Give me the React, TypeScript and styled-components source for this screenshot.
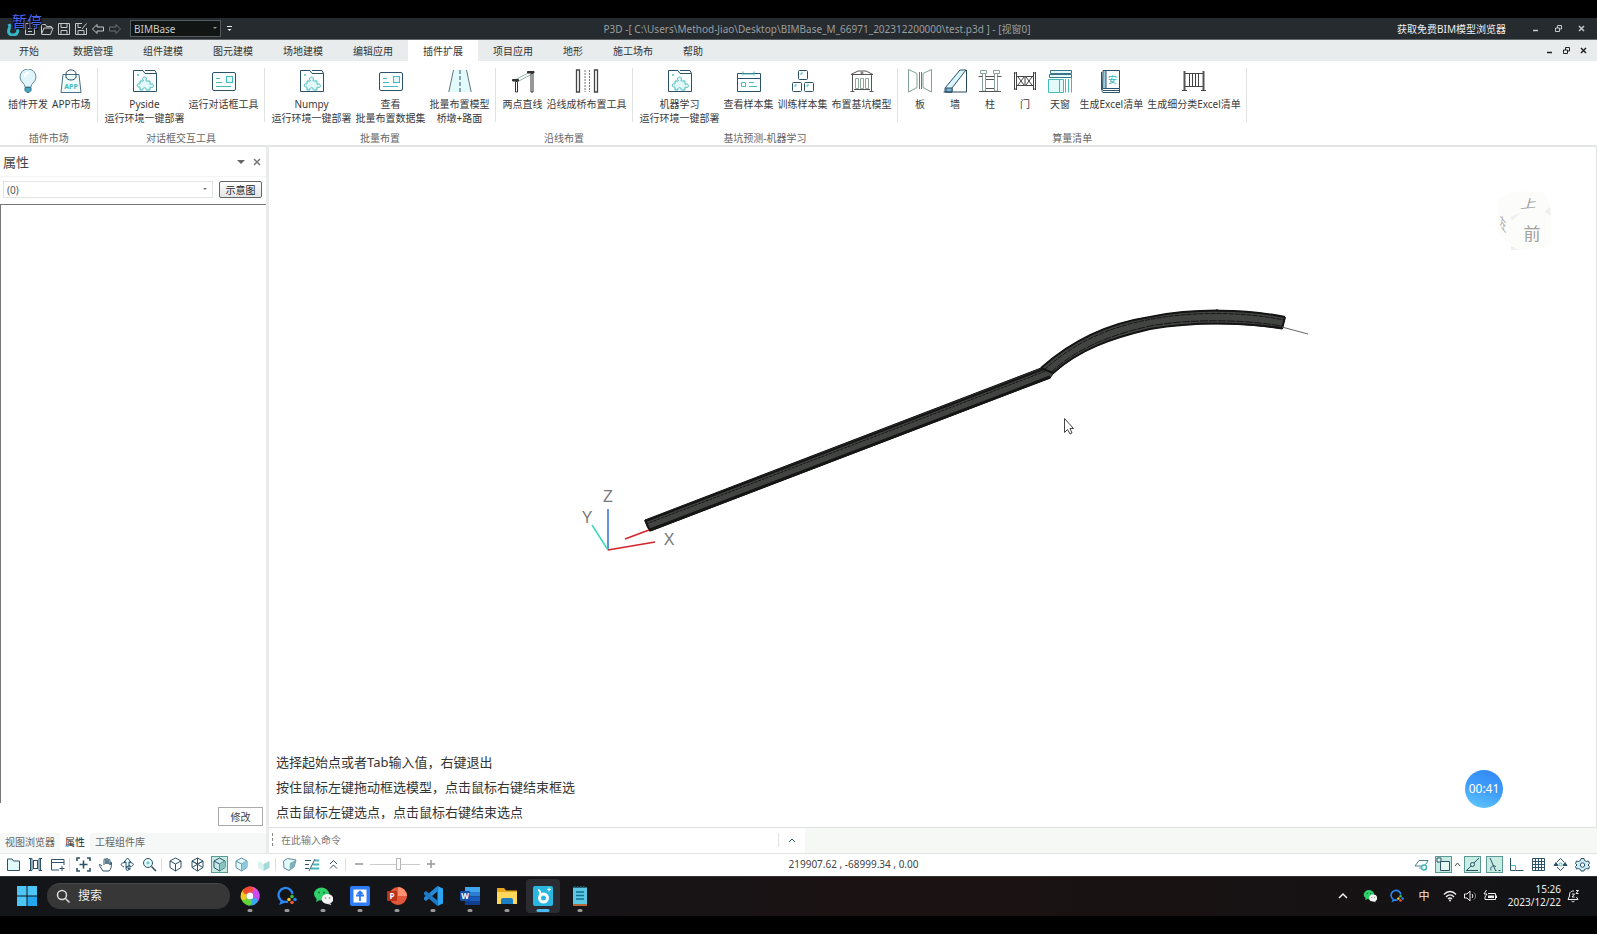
import React from "react";
import styled, { createGlobalStyle } from "styled-components";

const NAVY = "#2c5268";
const TEAL = "#45b9bb";
const PALE = "#e3fafa";
const GRAY = "#3f4444";

const GlobalStyle = createGlobalStyle`
  *, *::before, *::after { box-sizing: border-box; }
  body { margin: 0; background: #000; }
  body, button, input, select {
    font-family: "Noto Sans", "Noto Sans CJK SC", sans-serif;
    font-size: 10px;
    line-height: 14px;
    color: #333;
  }
  button { border: 0; padding: 0; background: none; white-space: nowrap; }
`;

/* ---------- shell ---------- */

const Screen = styled.div`
  position: relative;
  display: flex;
  flex-direction: column;
  min-height: 100vh;
  padding: 18px 0;
  background: #000;
`;

const RecorderState = styled.div`
  position: absolute;
  left: 12px;
  top: 11px;
  font-size: 15px;
  line-height: 20px;
  color: #4a66f0;
  text-shadow: 0 0 2px #000, 1px 1px 1px #000, -1px -1px 1px #000;
`;

const TitleBar = styled.header`
  display: flex;
  align-items: center;
  height: 22px;
  padding: 0 4px 0 5px;
  background: #262b2f;
  border-bottom: 1px solid #62686a;
`;

const QuickTools = styled.div`
  display: flex;
  gap: 1px;
  width: 125px;
`;

const QuickButton = styled.button`
  width: 16px;
  height: 16px;
  display: grid;
  place-items: center;
`;

const SelectBox = styled.label<{ $dark?: boolean }>`
  position: relative;
  display: block;
  flex: ${(p) => (p.$dark ? "0 0 91px" : "1")};
  &::after {
    content: "";
    position: absolute;
    right: ${(p) => (p.$dark ? "4px" : "6px")};
    top: 7px;
    border: 2px solid transparent;
    border-top-color: ${(p) => (p.$dark ? "#999" : "#777")};
  }
  select {
    display: block;
    width: 100%;
    height: 17px;
    padding: 0 3px;
    appearance: none;
    outline: 0;
    border-radius: 0;
    border: 1px solid ${(p) => (p.$dark ? "#565b5d" : "#e2e4e4")};
    background: ${(p) => (p.$dark ? "#111514" : "#fff")};
    color: ${(p) => (p.$dark ? "#c9cbcb" : "#555")};
  }
`;

const Title = styled.h1`
  flex: 1;
  margin: 0;
  text-align: center;
  font-size: 10px;
  line-height: 14px;
  font-weight: 400;
  color: #9a9d9e;
  white-space: nowrap;
`;

const ViewerLink = styled.a`
  color: #eee;
  text-decoration: none;
  padding-right: 18px;
`;

const WindowButtons = styled.div<{ $tone: string; $w: number }>`
  display: flex;
  color: ${(p) => p.$tone};
  button {
    width: ${(p) => p.$w}px;
    height: 18px;
    display: grid;
    place-items: center;
    color: inherit;
  }
`;

const TabStrip = styled.nav`
  display: flex;
  align-items: center;
  height: 21px;
  padding-right: 5px;
  background: #e8eced;
`;

const Tab = styled.button<{ $active?: boolean }>`
  height: 21px;
  padding: 0 15px;
  background: ${(p) => (p.$active ? "#fff" : "transparent")};
  &:first-child { padding: 0 19px; }
`;

const Spacer = styled.div`
  flex: 1;
`;

/* ---------- ribbon ---------- */

const Ribbon = styled.section`
  display: flex;
  height: 86px;
  padding-top: 7px;
  background: #fff;
  border-bottom: 2px solid #e4e6e6;
`;

const Group = styled.div`
  display: flex;
  flex-direction: column;
  &:first-child > :first-child { padding-left: 8px; padding-right: 6px; }
`;

const GroupTools = styled.div`
  display: flex;
  align-items: flex-start;
  gap: 4px;
  height: 54px;
  padding: 0 5px 0 7px;
  border-right: 1px solid #e0e2e2;
`;

const Tool = styled.button`
  display: flex;
  flex-direction: column;
  align-items: center;
  min-width: 31px;
  padding-top: 1px;
  color: #3a3a3a;
  svg { flex: none; margin-bottom: 4px; }
`;

const GroupLabel = styled.div`
  padding-top: 9px;
  text-align: center;
  color: #666;
`;

/* ---------- work area ---------- */

const Work = styled.main`
  flex: 1;
  display: flex;
  background: #fff;
`;

const Panel = styled.aside`
  display: flex;
  flex-direction: column;
  width: 269px;
  border-right: 3px solid #eaecec;
`;

const PanelHead = styled.div`
  display: flex;
  align-items: center;
  height: 30px;
  padding: 0 1px 0 3px;
  border-bottom: 1px solid #f4f5f5;
  h2 {
    flex: 1;
    margin: 0;
    font-size: 13px;
    line-height: 20px;
    font-weight: 400;
    color: #444;
  }
  button {
    width: 16px;
    height: 16px;
    display: grid;
    place-items: center;
  }
`;

const PanelRow = styled.div`
  display: flex;
  gap: 6px;
  align-items: center;
  height: 27px;
  padding: 0 4px 2px 3px;
`;

const SchemaButton = styled.button`
  width: 43px;
  height: 17px;
  border: 1px solid #666;
  border-radius: 2px;
  background: linear-gradient(#fff, #e2e6e6);
  color: #222;
`;

const PropertyList = styled.div`
  flex: 1;
  border-top: 1px solid #777;
  border-left: 1px solid #777;
`;

const PanelFoot = styled.div`
  display: flex;
  justify-content: flex-end;
  padding: 4px 3px 7px;
`;

const EditButton = styled.button`
  width: 45px;
  height: 19px;
  border: 1px solid #aaa;
  background: #fff;
  color: #444;
`;

const PanelTabs = styled.div`
  display: flex;
  height: 21px;
  background: #f5f8f6;
  border-bottom: 1px solid #e8eaea;
`;

const PanelTab = styled.button<{ $active?: boolean }>`
  height: 17px;
  padding: 0 5px;
  color: ${(p) => (p.$active ? "#222" : "#666")};
  background: ${(p) => (p.$active ? "#fff" : "transparent")};
`;

const Stage = styled.section`
  flex: 1;
  display: flex;
  flex-direction: column;
  min-width: 0;
`;

const Viewport = styled.div`
  position: relative;
  flex: 1;
  display: flex;
  flex-direction: column;
  justify-content: flex-end;
  border-right: 1px solid #e2e4e4;
  border-bottom: 1px solid #e0e2e2;
`;

const Scene = styled.svg`
  position: absolute;
  inset: 0;
  width: 100%;
  height: 100%;
`;

const Prompts = styled.div`
  padding: 0 0 2px 7px;
  font-size: 13px;
  line-height: 25px;
  color: #333;
`;

const Timer = styled.div`
  position: absolute;
  right: 93px;
  bottom: 19px;
  width: 38px;
  height: 38px;
  border-radius: 50%;
  background: linear-gradient(200deg, #2f86f6, #3f9df8 50%, #63cbfb);
  color: #fff;
  font-size: 12px;
  line-height: 38px;
  text-align: center;
`;

const CommandBar = styled.div`
  display: flex;
  height: 26px;
  background: #f6f8f6;
  border-bottom: 1px solid #e0e2e2;
`;

const CommandField = styled.div`
  display: flex;
  align-items: center;
  flex: 0 1 536px;
  padding-bottom: 2px;
  background: #fff;
  &::before {
    content: "";
    height: 13px;
    margin-left: 3px;
    border-left: 1px dashed #888;
  }
  input {
    flex: 1;
    border: 0;
    outline: 0;
    padding: 0 8px;
    background: none;
  }
  input::placeholder { color: #777; opacity: 1; }
  button {
    width: 27px;
    height: 14px;
    border-left: 1px solid #e0e2e2;
    display: grid;
    place-items: center;
  }
`;

/* ---------- status bar ---------- */

const StatusBar = styled.footer`
  display: flex;
  align-items: center;
  height: 22px;
  padding: 0 4px 2px 2px;
  background: #fff;
`;

const StatusSide = styled.div<{ $end?: boolean }>`
  flex: 1;
  display: flex;
  align-items: center;
  justify-content: ${(p) => (p.$end ? "flex-end" : "flex-start")};
`;

const StatusButton = styled.button<{ $on?: boolean }>`
  width: 22px;
  height: 18px;
  display: grid;
  place-items: center;
  span {
    display: grid;
    place-items: center;
    width: 17px;
    height: 17px;
    border: 1px solid ${(p) => (p.$on ? "#5b9a92" : "transparent")};
    background: ${(p) => (p.$on ? "#c6ece4" : "transparent")};
  }
`;

const Caret = styled.button`
  width: 7px;
`;

const Divider = styled.i`
  width: 1px;
  height: 13px;
  margin: 0 2px 0 1px;
  background: #dcdede;
`;

const ZoomSlider = styled.input`
  appearance: none;
  width: 50px;
  height: 14px;
  margin: 0;
  background: linear-gradient(#ccc, #ccc) center / 100% 1px no-repeat;
  &::-webkit-slider-thumb {
    appearance: none;
    width: 5px;
    height: 12px;
    background: #fff;
    border: 1px solid #b5b5b5;
  }
`;

const Coordinates = styled.output`
  width: 260px;
  padding-left: 112px;
  text-align: center;
  white-space: nowrap;
  color: #444;
`;

/* ---------- desktop taskbar ---------- */

const Taskbar = styled.div`
  display: flex;
  align-items: center;
  height: 40px;
  padding: 0 16px 2px 16px;
  background: linear-gradient(90deg, #131518, #141518 30%, #1b1213 55%, #181213 75%, #121316);
  border-top: 1px solid #333;
`;

const StartButton = styled.button`
  width: 22px;
  height: 22px;
  margin-right: 9px;
  display: grid;
  place-items: center;
`;

const SearchPill = styled.label`
  display: flex;
  align-items: center;
  gap: 8px;
  width: 183px;
  height: 26px;
  margin-right: 3px;
  padding-left: 9px;
  border-radius: 13px;
  background: #373737;
  border-top: 1px solid #484848;
  input {
    width: 120px;
    padding: 0;
    border: 0;
    outline: 0;
    background: none;
    font-size: 12px;
    line-height: 18px;
  }
  input::placeholder { color: #eee; opacity: 1; }
`;

const Apps = styled.div`
  flex: 0 1 364px;
  display: flex;
  justify-content: space-between;
`;

const AppButton = styled.button<{ $active?: boolean }>`
  position: relative;
  width: 34px;
  height: 34px;
  border-radius: 4px;
  display: grid;
  place-items: center;
  background: ${(p) => (p.$active ? "#2b2c31" : "transparent")};
  &::after {
    content: "";
    position: absolute;
    bottom: 1px;
    left: 50%;
    width: ${(p) => (p.$active ? 13 : 5)}px;
    height: 3px;
    border-radius: 2px;
    transform: translateX(-50%);
    background: ${(p) => (p.$active ? "#4cb8f0" : "#999")};
  }
`;

const Tray = styled.div`
  display: flex;
  align-items: center;
  color: #eee;
`;

const TrayButton = styled.button<{ $w: number }>`
  width: ${(p) => p.$w}px;
  height: 24px;
  display: grid;
  place-items: center;
  color: #eee;
  font-size: 11px;
`;

const Clock = styled.div`
  width: 60px;
  margin-right: 4px;
  text-align: right;
  line-height: 13px;
  color: #eee;
`;

/* ---------- drawings ---------- */

type IconProps = { size?: number; box?: string; children: React.ReactNode; stroke?: string };

function Icon({ size = 24, box, children, stroke = NAVY }: IconProps) {
  return (
    <svg
      width={size}
      height={size}
      viewBox={box ?? `0 0 ${size} ${size}`}
      fill="none"
      stroke={stroke}
      strokeWidth="1"
      aria-hidden="true"
    >
      {children}
    </svg>
  );
}

const puzzle = (
  <Icon>
    <path d="M.5 22.5V1.5H10l2 3h11.500v18z" fill="#fbffff" />
    <path d="M12 1.500h10l1.500 3" />
    <circle cx="5" cy="6" r=".6" stroke={TEAL} />
    <path
      d="M7 12h3c1 0 0-1-.5-1.800C9 7.500 14 7.500 13.500 10c-.5 1-1 2 0 2h3.500v3c0 1 1 0 1.800 0 2.200 0 2.200 3.500 0 3.500-1 0-1.800-1-1.800 0V21h-3.500c-1 0 0-1-.5-1.500-.8-1-2.500-1-3 0-.3.500.3 1.500-.7 1.500H7v-2.500c0-1-1-.5-1.500-.5-1.800-.5-1.800-3 0-3.200.5 0 1.500.8 1.500-.3z"
      stroke={TEAL}
      fill={PALE}
    />
  </Icon>
);

const card = (
  <Icon>
    <rect x=".5" y="3.500" width="23" height="18" rx="1.500" fill="#fbffff" />
    <path d="M4 9.500h4M4 13.500h6M4 17.500h15" stroke={TEAL} />
    <rect x="14.500" y="7.500" width="6" height="6" stroke={TEAL} fill={PALE} />
  </Icon>
);

const icons = {
  bulb: (
    <Icon>
      <path d="M9 18c0-4-5-5-5-10a8 8 0 0 1 16 0c0 5-5 6-5 10z" fill="#dff5fa" stroke="#6a8fa0" />
      <path d="M9 8c0-3 2-4 4-4" stroke="#fff" strokeWidth="2" />
      <path d="M9 18.500h6v3l-2 2h-2l-2-2z" fill="#49a3bd" stroke="#2f6f88" />
    </Icon>
  ),
  bag: (
    <Icon>
      <path d="M4 5.500h16l2 18H2z" fill="#effcfc" stroke="#4b6e80" />
      <path d="M7 8.500V5c0-5.500 10-5.500 10 0v3.500M7 8c1 4 9 4 10 0" />
      <text x="12" y="20" textAnchor="middle" fontSize="7" fontWeight="700" fill={TEAL} stroke="none" fontFamily="Noto Sans">APP</text>
    </Icon>
  ),
  puzzle,
  card,
  road: (
    <Icon>
      <path d="M6 1h12l5 22H1z" fill={PALE} stroke="none" />
      <path d="M5.500 1 .8 23M18.500 1l4.700 22" stroke="#5d7585" />
      <path d="M12 1v22" strokeDasharray="4 2" />
    </Icon>
  ),
  piers: (
    <Icon stroke="#333">
      <path d="M2 12 19 3M6 13l15-8" stroke="#8fb5a5" />
      <path d="M4.500 12.500h2v10.500h-2zM20 4.500h2V23h-2z" fill="#fff" />
      <path d="M1.500 10.500h6v1.500h-6zM16.500 2.500h6.500v1.500h-6.500z" fill="#333" />
    </Icon>
  ),
  along: (
    <Icon stroke="#444">
      <path d="M1.500 1h3v22h-3zM19.500 1h3v22h-3z" strokeWidth="1.300" />
      <path d="M10 1v22M14.500 1v22" strokeDasharray="2 1" stroke="#777" />
    </Icon>
  ),
  calendar: (
    <Icon>
      <path d="M.5 4.500h23v18H.5zM1 9.500h22" fill="#fbffff" />
      <path d="M6 2.500v4M17 2.500v4M4.500 13.500h4v4h-4zM12 13.500h5M12 17.500h8" stroke={TEAL} />
      <path d="M7 5h9" stroke={TEAL} />
    </Icon>
  ),
  boxes: (
    <Icon>
      <rect x="7.500" y="1.500" width="9" height="9" rx="1" />
      <rect x="1.500" y="13.500" width="9" height="9" rx="1" />
      <rect x="13.500" y="13.500" width="9" height="9" rx="1" />
      <path d="M10 6V4h2M4 18v-2h2M16 18v-2h2" stroke={TEAL} />
    </Icon>
  ),
  pit: (
    <Icon stroke="#555">
      <path d="M1 5.500 8 2h8l7 3.500zM2.500 6v17M21.500 6v17M.5 22.500h4M19.500 22.500h4M4 20.500h16" />
      <path d="M5.500 9.500h3v10h-3zM10.500 9.500h3v10h-3zM15.500 9.500h3v10h-3z" stroke="#8fa89a" />
      <circle cx="12" cy="4" r="1" />
    </Icon>
  ),
  slab: (
    <Icon stroke="#7fa193">
      <path d="M.5.500 9 4.500v14L.5 23zM23.500.500 15 4.500v14l8.500 4.500z" />
      <path d="M11.500 3v17M13.500 3v17" stroke="#777" />
    </Icon>
  ),
  wall: (
    <Icon>
      <path d="M2 19 17 1h6L9 19v4H2z" fill="#d9f4fa" />
      <path d="M3 19h6v4H3z" fill="#7fb3cf" />
      <path d="M.5 23h23V1" stroke="#244b63" />
    </Icon>
  ),
  column: (
    <Icon stroke="#555">
      <path d="M4.500 4h3v18h-3zM16.500 4h3v18h-3z" stroke="#8aa79a" />
      <path d="M2.500 1.500h6v3h-6zM15.500 1.500h6v3h-6z" stroke="#8aa79a" fill="#fff" />
      <path d="M.5 7.500h4m3 0h9m3 0h4M8 10.500h8M8 19.500h8M1 22.500h22" />
    </Icon>
  ),
  gate: (
    <Icon stroke="#444">
      <path d="M1.500 3v18M3.500 3v18M20.500 3v18M22.500 3v18M1 4h3M1 20h3M20 4h3M20 20h3M4 7.500h16M4 16.500h16" />
      <path d="m5 8 6 8m0-8-6 8m8-8 6 8m0-8-6 8M12 8v8" />
    </Icon>
  ),
  skylight: (
    <Icon stroke={TEAL}>
      <path d="M2.500 1.500h21v3h-21zM1.500 5.500h22v3h-22z" fill={PALE} stroke="#3b7486" />
      <path d="M.5 10.500h15v13H.5z" fill={PALE} />
      <path d="M11.500 11v12M17.500 10v13.500M20.500 10v13.500M23.500 9v14.500" />
    </Icon>
  ),
  book: (
    <Icon>
      <path d="M4 1.500h16.500v18H4c-1 0-1.500 4 0 4h16.500v-4" fill="#fbffff" />
      <path d="M4 1.500h3v18H3.500z" fill="#9ccbe0" />
      <path d="M2.500 3v18M4 21.500h16" />
      <text x="13.500" y="14" textAnchor="middle" fontSize="9" fill="#2fb5bd" stroke="none" fontFamily="Noto Sans CJK SC">安</text>
    </Icon>
  ),
  fence: (
    <Icon stroke="#444">
      <path d="M2.500 2v20M21.500 2v20" stroke="#555" strokeWidth="2" />
      <path d="M3 4.500h18M3 17.500h18M7.500 5v12M10.500 5v12M13.500 5v12M16.500 5v12M0 21.500h5M19 21.500h5" />
    </Icon>
  ),
};

type IconName = keyof typeof icons;

const groups: { label: string; tools: [IconName, string, string?][] }[] = [
  { label: "插件市场", tools: [["bulb", "插件开发"], ["bag", "APP市场"]] },
  { label: "对话框交互工具", tools: [["puzzle", "Pyside", "运行环境一键部署"], ["card", "运行对话框工具"]] },
  {
    label: "批量布置",
    tools: [
      ["puzzle", "Numpy", "运行环境一键部署"],
      ["card", "查看", "批量布置数据集"],
      ["road", "批量布置模型", "桥墩+路面"],
    ],
  },
  { label: "沿线布置", tools: [["piers", "两点直线"], ["along", "沿线成桥布置工具"]] },
  {
    label: "基坑预测-机器学习",
    tools: [
      ["puzzle", "机器学习", "运行环境一键部署"],
      ["calendar", "查看样本集"],
      ["boxes", "训练样本集"],
      ["pit", "布置基坑模型"],
    ],
  },
  {
    label: "算量清单",
    tools: [
      ["slab", "板"],
      ["wall", "墙"],
      ["column", "柱"],
      ["gate", "门"],
      ["skylight", "天窗"],
      ["book", "生成Excel清单"],
      ["fence", "生成细分类Excel清单"],
    ],
  },
];

const tabs = ["开始", "数据管理", "组件建模", "图元建模", "场地建模", "编辑应用", "插件扩展", "项目应用", "地形", "施工场布", "帮助"];

const quick: [string, React.ReactNode][] = [
  ["BIMBase", <path key="l" d="M4 5c-3 5-1 8 3 8 5 0 6-5 3-7M3 2l1 3" stroke="#35b6c4" strokeWidth="3" />],
  ["新建", <path key="n" d="M2.500 1.500h9v11h-9zM5 6.500h4M5 9.500h4" />],
  ["打开", <path key="o" d="M1.500 12V2.500h4l1 2h5V6M1.500 12 4 6h9l-2.500 6.500h-9" />],
  ["保存", <path key="s" d="M1.500 1.500h11v11h-11zM4 1.500v4h6v-4M4 12.500v-4h6v4" />],
  ["另存为", <path key="a" d="M8 1.500H1.500v11h11V6M4 1.500v4h3M4 12.500v-4h6v4M12.500 1.500 8 7" />],
  ["撤销", <path key="u" d="M1.500 7 6 2.500V5h6.500v4H6v2.500z" />],
  ["重做", <path key="r" d="M12.500 7 8 2.500V5H1.500v4H8v2.500z" stroke="#6b7274" />],
];

function WindowControls({ tone, width }: { tone: string; width: number }) {
  return (
    <WindowButtons $tone={tone} $w={width}>
      <button aria-label="最小化"><Icon size={9} stroke="currentColor"><path d="M2 6.500h5" strokeWidth="1.500" /></Icon></button>
      <button aria-label="还原">
        <Icon size={9} stroke="currentColor"><path d="M1.500 4h4v3.500h-4zM3.500 4V1.500h4V5h-2" /></Icon>
      </button>
      <button aria-label="关闭"><Icon size={9} stroke="currentColor"><path d="m2 2 5 5m0-5L2 7" strokeWidth="1.500" /></Icon></button>
    </WindowButtons>
  );
}

const cube = (fill: string, extra?: React.ReactNode, stroke = NAVY) => (
  <>
    <path d="M7.500 1 13 4v6.500L7.500 14 2 10.500V4z" fill={fill} stroke={stroke} />
    <path d="M2 4l5.500 3L13 4M7.500 7v7" stroke={stroke} />
    {extra}
  </>
);

type StatusItem = [string, React.ReactNode, boolean?];

const fileTools: StatusItem[] = [
  ["文件夹", <path key="a" d="M1.500 13.500V2H6l1.500 2h6v9.500z" fill={PALE} />],
  ["并排", <path key="a" d="M1 1.500h3v12H1M14 1.500h-3v12h3M2.500 2v11M12.500 2v11M5.500 3v9M9.500 3v9M6 3.500h3M6 11.500h3" />],
  ["新窗口", <path key="a" d="M14 8V2.500H1.500V13H9M1.500 5.500H14M12 9v5M9.500 11.500h5" />],
];
const navTools: StatusItem[] = [
  ["适合窗口", <path key="a" d="M1 4V1h3M11 1h3v3M14 11v3h-3M4 14H1v-3M7.500 3.500v8M3.500 7.500h8" strokeWidth="1.600" />],
  ["平移", <path key="a" d="M4 9 2 7.500c-1-.5-1 1 0 2L5 14h6c2-2 2.500-4 2.500-8 0-1.500-1.500-1-1.500 0v2-4.500c0-1.500-2-1.500-2 0V7 2.500C10 1 8 1 8 2.500V7 3c0-1.500-2-1.500-2 0v5" />],
  ["环绕", <g key="a"><path d="M6 12V5H4l3.500-4L11 5H9v7l-1.500 2z" fill={PALE} /><path d="M4 10C-1 8 1 5.500 6 5.500M9 5.500c5 0 6 3 1 4.500v-1.500L6 10l4 2.500V11" /></g>],
  ["缩放", <g key="a"><circle cx="6" cy="6" r="4.500" fill={PALE} /><path d="m9.500 9.500 4.500 4.500" strokeWidth="1.500" /><path d="M4.500 6h3M6 4.500v3" stroke={TEAL} /></g>],
];
const displayTools: StatusItem[] = [
  ["线框", cube("#fff")],
  ["隐藏线", cube("#fff", <path d="m2 10.500 11-6.500M2 4l11 6.500M7.500 1v13" />)],
  ["着色", cube("#c4e9e6", <path d="M7.500 7v7l5.500-3.500V4z" fill="#86c3c1" stroke="none" />), true],
  ["真实", cube("#e6f8fa", <path d="M7.500 7v7l5.500-3.500V4z" fill="#8ccadb" stroke="none" />, "#5a8fa3")],
  ["无边线", <g key="a" stroke="none"><path d="m2 4 5.500 3v7L2 11z" fill="#d9f1ef" /><path d="m7.500 7 6-3v7l-6 3z" fill="#a3dad9" /></g>],
];
const clipTools: StatusItem[] = [
  ["剖切", <g key="a"><path d="m1.500 4 4-2.500 8.500 1.500-2 7-5 3.500-5-2.500z" fill={PALE} stroke="#5a8796" /><path d="m8 6 6-3-2 7-4.500 3.500z" fill="#7fb0bb" stroke="none" /></g>],
  ["图层", <g key="a"><path d="M1 3.500h6M1 7.500h4M1 11.500h4M5 14 11 2" /><path d="M11 3.500h4M9 7.500h6M7 11.500h8" stroke={TEAL} strokeWidth="2" /></g>],
  ["展开", <path key="a" d="m4 7 3.500-3.500L11 7M4 11.500 7.500 8l3.500 3.500" />],
];
const snapTools: StatusItem[] = [
  ["工作平面", <g key="a"><path d="M7 9H1l4-5.500h9L12 7" stroke="#4a8191" /><circle cx="10" cy="10.500" r="2.500" stroke={TEAL} strokeWidth="1.500" /><path d="M7 11H5M13 6l-2 2" stroke={TEAL} /></g>],
];
const modeTools: StatusItem[] = [
  ["最近点", <g key="a"><path d="M1 13.500h12M2 13l4-4M9 6l5-5" /><circle cx="7.500" cy="7.500" r="2" /></g>, true],
  ["角度", <g key="a"><path d="m3 1 5.500 12.500M8 13.500h1.500m2 0h2M4 13.500c-1-3 1-6 5-4" /></g>, true],
  ["正交", <g key="a"><path d="M1.500 1v12.500h13" /><path d="M2 8.500h4.500v5" stroke={TEAL} /></g>],
  ["网格", <path key="a" d="M1.500 1.500h12v12h-12zM4.500 1v13M7.500 1v13M10.500 1v13M1 4.500h13M1 7.500h13M1 10.500h13" />],
  ["定位", <g key="a"><path d="M4 5 7.500 1.500 11 5M4 10l3.500 3.500L11 10" /><circle cx="7.500" cy="7.500" r="1.500" stroke={TEAL} /><path d="M1 8.500 3 5.500l2 3zM10 8.500l2-3 2 3z" fill={NAVY} /></g>],
  ["设置", <g key="a"><path d="M6 1.500h3l.5 2 2 1 2-.5 1 2.500L13 8l1.500 1.500-1 2.500-2-.5-2 1L9 14H6l-.5-1.500-2-1-2 .5-1-2.500L2 8 .5 6.500l1-2.500 2 .5 2-1z" fill="#cdeef4" /><circle cx="7.500" cy="8" r="2.200" fill="#fff" /></g>],
];

function StatusTools({ items }: { items: StatusItem[] }) {
  return (
    <>
      {items.map(([name, art, on]) => (
        <StatusButton key={name} aria-label={name} $on={on}>
          <span><Icon size={15}>{art}</Icon></span>
        </StatusButton>
      ))}
    </>
  );
}

function Bridge() {
  const topArc = "C1078 335 1117 322 1150 317 C1195 308 1245 309 1285 317";
  const lowArc = "C1245 323 1195 321 1150 329 C1112 338 1078 350 1053 374";
  return (
    <g>
      <path d={`M645 520 L1041 368 ${topArc} L1282 329 ${lowArc} L1050 378 L650 531 L647 526 Z`} fill="#424442" stroke="#111" />
      <g fill="none" stroke="#151515">
        <path d="M646 521 1044 369" strokeWidth="2" />
        <path d="M646 524 1046 371" strokeDasharray="3 1" />
        <path d="M650 530 1050 377" strokeWidth="3" />
        <path d="M1044 370C1080 337 1119 325 1152 319C1196 311 1245 312 1284 320" strokeDasharray="5 1" />
        <path d="M1050 373C1078 347 1114 334 1150 326C1196 318 1245 320 1282 326" strokeDasharray="8 1" />
        <path d="M1053 373C1080 349 1112 338 1150 329C1196 321 1245 323 1282 328" strokeWidth="2" />
        <path d={`M1041 368${topArc}`} strokeWidth="2" />
        <path d="M1041 368l12 5M1285 317l-3 12M645 520l5 11" strokeWidth="2" />
        <path d="M1217 309v3" />
      </g>
      <path d="m1282 327 26 7" stroke="#666" />
    </g>
  );
}

function SceneView() {
  return (
    <Scene viewBox="269 147 1327 680" role="img" aria-label="三维视图">
      <Bridge />
      <path d="m625 539 24-9" stroke="#d5232b" strokeWidth="1.500" />
      <path d="M608 550v-41" stroke="#2c6fd6" strokeWidth="1.500" />
      <path d="m608 550-16-25" stroke="#3fd6b8" strokeWidth="1.500" />
      <path d="m608 550 47-8" stroke="#d5232b" strokeWidth="1.500" />
      <g fontFamily="Liberation Sans" fontSize="16" fill="#777" textAnchor="middle">
        <text x="608" y="502">Z</text>
        <text x="587" y="523">Y</text>
        <text x="669" y="545">X</text>
      </g>
      <path d="M1064.500 418.500v14l3-3 2.500 4.500 2-1-2-4.500h3.500z" fill="#fff" stroke="#444" />
      <path d="M1498 203q0-4 5-6l10-5q18-2 32 1l6 17v32q-1 5-6 6l-26 2-15-11q-6-4-6-9z" fill="#fcfdfb" />
      <path d="M1510 217 1520 213 1512 221zM1550 207l1 9-7-4zM1511 246l8 4-8 0z" fill="#eff1ee" />
      <g fontFamily="Noto Sans CJK SC" fill="#a0a0a0" textAnchor="middle">
        <text x="1532" y="240" fontSize="17">前</text>
        <text fontSize="16" transform="matrix(1 -.1 -.2 .75 1528 208)">上</text>
        <text fontSize="15" transform="matrix(.4 .5 0 1 1503 229)">左</text>
      </g>
    </Scene>
  );
}

const wechat = (
  <g stroke="none">
    <ellipse cx="8.500" cy="8" rx="7.500" ry="6.500" fill="#2fd06a" />
    <path d="m4 12-1 4 4-2z" fill="#2fd06a" />
    <ellipse cx="14.500" cy="13" rx="5.800" ry="5" fill="#f3f3f3" />
    <path d="m17 17 1.500 2-4-1z" fill="#f3f3f3" />
    <g fill="#1a7a3c"><circle cx="6" cy="6.500" r="1" /><circle cx="11" cy="6.500" r="1" /></g>
    <g fill="#888"><circle cx="12.500" cy="12" r=".8" /><circle cx="16.500" cy="12" r=".8" /></g>
  </g>
);

const workchat = (
  <g>
    <path d="M11 15.500A7 7 0 1 1 15.500 8M5 14l-1 3 4-1.500" stroke="#2b86f0" strokeWidth="2.300" />
    <g stroke="none">
      <circle cx="15" cy="10.500" r="1.800" fill="#37c24f" /><circle cx="18" cy="13.500" r="1.800" fill="#2b86f0" />
      <circle cx="15" cy="16.500" r="1.800" fill="#f2592b" /><circle cx="12" cy="13.500" r="1.800" fill="#f8c21c" />
    </g>
  </g>
);

const apps: [string, React.ReactNode][] = [
  ["浏览器", (
    <g key="a" strokeWidth="6" strokeLinecap="round">
      <path d="M10 3.500a6.500 6.500 0 0 1 5 2" stroke="#f04fc8" />
      <path d="M16 7a6.500 6.500 0 0 1 0 6" stroke="#c84af0" />
      <path d="M14.500 15a6.500 6.500 0 0 1-4.500 1.500" stroke="#36a8f0" />
      <path d="M9 16.500A6.500 6.500 0 0 1 4.500 13" stroke="#62d43a" />
      <path d="M3.500 11A6.500 6.500 0 0 1 5 6" stroke="#f9c81f" />
      <path d="M6 5a6.500 6.500 0 0 1 4-1.500" stroke="#f34a31" />
      <circle cx="10" cy="10" r="3.500" fill="#fff" stroke="none" />
    </g>
  )],
  ["企业微信", workchat],
  ["微信", wechat],
  ["待办", (
    <g key="a"><rect width="20" height="20" rx="2" fill="#2f7df6" stroke="none" /><rect x="3.500" y="3.500" width="13" height="13" fill="#fff" stroke="none" />
      <path d="M10 15V6M6 9.500h8M7.500 8 10 5.500 12.500 8" stroke="#2f7df6" strokeWidth="1.800" /></g>
  )],
  ["PowerPoint", (
    <g key="a" stroke="none"><circle cx="11" cy="10" r="9" fill="#e2583a" /><path d="M11 1a9 9 0 0 1 9 9h-9z" fill="#ff9070" /><rect y="5" width="10" height="10" rx="1" fill="#b83318" />
      <text x="5" y="13" fontSize="8" fontWeight="700" fill="#fff" textAnchor="middle" fontFamily="Noto Sans">P</text></g>
  )],
  ["Visual Studio Code", (
    <g key="a" stroke="none"><path d="m14.500 0 5.500 2.500v15L14.500 20z" fill="#2ba5f3" /><path d="m14.500 0 .5 5L3 15l-2-1.500v-2z" fill="#2487d8" /><path d="m14.500 20 .5-5L3 5 1 6.500v2z" fill="#1c79c6" /></g>
  )],
  ["Word", (
    <g key="a" stroke="none"><path d="M5 1h15v5H5z" fill="#41a5ee" /><path d="M5 6h15v4.500H5z" fill="#2b7cd3" /><path d="M5 10.500h15V15H5z" fill="#185abd" /><path d="M5 15h15v4H5z" fill="#103f91" /><rect y="5" width="10" height="10" rx="1" fill="#164fa8" />
      <text x="5" y="13" fontSize="8" fontWeight="700" fill="#fff" textAnchor="middle" fontFamily="Noto Sans">W</text></g>
  )],
  ["资源管理器", (
    <g key="a" stroke="none"><path d="M0 2h7l2 2.500h11V18H0z" fill="#e9a81c" /><path d="M0 6h20v12H0z" fill="#ffd75a" /><path d="M4 18v-4q0-2 2-2h8q2 0 2 2v4z" fill="#1b7dc4" /></g>
  )],
  ["BIMBase", (
    <g key="a"><rect width="20" height="20" rx="2" fill="#27b7e0" stroke="none" /><circle cx="10.500" cy="12" r="4" stroke="#fff" strokeWidth="3" /><path d="M5 4c2 0 2.500 2 2.500 6" stroke="#fff" strokeWidth="2" /><path d="M14 3.500h4M16 1.500v4" stroke="#fff" /></g>
  )],
  ["记事本", (
    <g key="a"><path d="M3 1.500h14V19H3z" fill="#5cc8e6" stroke="none" /><path d="M3 18h14v2H3z" fill="#b9683a" stroke="none" /><path d="M6 6h8M6 9.500h8M6 13h8" stroke="#14708c" strokeWidth="1.500" /><path d="M4 1h12" stroke="#1d5c74" strokeWidth="2" strokeDasharray="1.500 1.500" /></g>
  )],
];

export default function App() {
  return (
    <Screen>
      <GlobalStyle />
      <TitleBar>
        <QuickTools>
          {quick.map(([name, art]) => (
            <QuickButton key={name} aria-label={name}>
              <Icon size={14} stroke="#c4c8c9">{art}</Icon>
            </QuickButton>
          ))}
        </QuickTools>
        <SelectBox $dark>
          <select aria-label="工作空间"><option>BIMBase</option></select>
        </SelectBox>
        <QuickButton aria-label="自定义工具栏">
          <Icon size={7} stroke="#eee"><path d="M1 1.500h5" /><path d="M1.500 4h4l-2 2z" fill="#eee" stroke="none" /></Icon>
        </QuickButton>
        <Title>P3D -[ C:\Users\Method-Jiao\Desktop\BIMBase_M_66971_202312200000\test.p3d ] - [视窗0]</Title>
        <ViewerLink href="#viewer">获取免费BIM模型浏览器</ViewerLink>
        <WindowControls tone="#c4c8c9" width={23} />
      </TitleBar>
      <RecorderState>暂停</RecorderState>

      <TabStrip>
        {tabs.map((t) => <Tab key={t} $active={t === "插件扩展"}>{t}</Tab>)}
        <Spacer />
        <WindowControls tone="#222" width={17} />
      </TabStrip>

      <Ribbon>
        {groups.map((g) => (
          <Group key={g.label}>
            <GroupTools>
              {g.tools.map(([icon, first, second], i) => (
                <Tool key={i}>
                  {icons[icon]}
                  <span>{first}</span>
                  {second && <span>{second}</span>}
                </Tool>
              ))}
            </GroupTools>
            <GroupLabel>{g.label}</GroupLabel>
          </Group>
        ))}
      </Ribbon>

      <Work>
        <Panel>
          <PanelHead>
            <h2>属性</h2>
            <button aria-label="面板选项"><Icon size={8}><path d="M0 2h8L4 6z" fill="#666" stroke="none" /></Icon></button>
            <button aria-label="关闭面板"><Icon size={8} stroke="#777"><path d="m1 1 6 6m0-6L1 7" strokeWidth="1.500" /></Icon></button>
          </PanelHead>
          <PanelRow>
            <SelectBox><select aria-label="选中对象"><option>(0)</option></select></SelectBox>
            <SchemaButton>示意图</SchemaButton>
          </PanelRow>
          <PropertyList />
          <PanelFoot><EditButton>修改</EditButton></PanelFoot>
          <PanelTabs>
            <PanelTab>视图浏览器</PanelTab>
            <PanelTab $active>属性</PanelTab>
            <PanelTab>工程组件库</PanelTab>
          </PanelTabs>
        </Panel>
        <Stage>
          <Viewport>
            <SceneView />
            <Prompts>
              <div>选择起始点或者Tab输入值，右键退出</div>
              <div>按住鼠标左键拖动框选模型，点击鼠标右键结束框选</div>
              <div>点击鼠标左键选点，点击鼠标右键结束选点</div>
            </Prompts>
            <Timer>00:41</Timer>
          </Viewport>
          <CommandBar>
            <CommandField>
              <input aria-label="命令" placeholder="在此输入命令" />
              <button aria-label="展开命令记录"><Icon size={8}><path d="m1 6 3-3 3 3" /></Icon></button>
            </CommandField>
          </CommandBar>
        </Stage>
      </Work>

      <StatusBar>
        <StatusSide>
          <StatusTools items={fileTools} />
          <Divider />
          <StatusTools items={navTools} />
          <Divider />
          <StatusTools items={displayTools} />
          <Divider />
          <StatusTools items={clipTools} />
          <Divider />
          <StatusButton aria-label="缩小"><Icon size={8} stroke="#999"><path d="M0 4h8" strokeWidth="1.500" /></Icon></StatusButton>
          <ZoomSlider type="range" aria-label="缩放比例" defaultValue={57} />
          <StatusButton aria-label="放大"><Icon size={8} stroke="#999"><path d="M0 4h8M4 0v8" strokeWidth="1.500" /></Icon></StatusButton>
        </StatusSide>
        <Coordinates>219907.62 , -68999.34 , 0.00</Coordinates>
        <StatusSide $end>
          <StatusTools items={snapTools} />
          <StatusTools items={[["视图框", <path key="a" d="M4.500 4.500h9v9h-9zM1 1h4v4H1z" fill="#e4f7f3" />, true]]} />
          <Caret aria-label="更多"><Icon size={7} stroke={GRAY}><path d="m1 5 2.500-3L6 5" /></Icon></Caret>
          <StatusTools items={modeTools} />
        </StatusSide>
      </StatusBar>

      <Taskbar>
        <StartButton aria-label="开始菜单">
          <Icon size={20}>
            <path d="M0 0h9.500v9.500H0zM10.500 0H20v9.500h-9.500zM0 10.500h9.500V20H0z" fill="#4cc6f7" stroke="none" />
            <path d="M10.500 10.500H20V20h-9.500z" fill="#22a6ee" stroke="none" />
          </Icon>
        </StartButton>
        <SearchPill>
          <Icon size={14} stroke="#ddd"><circle cx="6" cy="6" r="4.500" strokeWidth="1.500" /><path d="m9.500 9.500 4 4" strokeWidth="1.500" /></Icon>
          <input aria-label="搜索" placeholder="搜索" />
        </SearchPill>
        <Apps>
          {apps.map(([name, art]) => (
            <AppButton key={name} aria-label={name} $active={name === "BIMBase"}>
              <Icon size={20}>{art}</Icon>
            </AppButton>
          ))}
        </Apps>
        <Spacer />
        <Tray>
          <TrayButton $w={28} aria-label="隐藏的图标"><Icon size={10} stroke="#eee"><path d="m1 7 4-4 4 4" strokeWidth="1.500" /></Icon></TrayButton>
          <TrayButton $w={26} aria-label="微信"><Icon size={14} box="0 0 20 20">{wechat}</Icon></TrayButton>
          <TrayButton $w={27} aria-label="企业微信"><Icon size={14} box="0 0 20 20">{workchat}</Icon></TrayButton>
          <TrayButton $w={28}>中</TrayButton>
          <TrayButton $w={23} aria-label="网络">
            <Icon size={14} stroke="#eee"><path d="M1 5.500c3.500-4 8.500-4 12 0M3 8c2.500-2.800 5.500-2.800 8 0M5 10c1.500-1.500 2.500-1.500 4 0" strokeWidth="1.300" /><circle cx="7" cy="11.500" r="1" fill="#eee" stroke="none" /></Icon>
          </TrayButton>
          <TrayButton $w={18} aria-label="音量">
            <Icon size={14} stroke="#eee"><path d="M1.500 5v4H4l3 3V2L4 5zM9 5c1 1 1 3 0 4" /><path d="M11 3.500c2 2 2 5 0 7" stroke="#888" /></Icon>
          </TrayButton>
          <TrayButton $w={22} aria-label="电池">
            <Icon size={14} stroke="#eee"><path d="M5 4.500h7.500v6H2V8" /><path d="M5 6.500h6v2.500H5zM12.500 6.500H14V9h-1.500z" fill="#eee" stroke="none" /><path d="M3.500 1 1 5h3L2 8" /></Icon>
          </TrayButton>
          <Clock><div>15:26</div><div>2023/12/22</div></Clock>
          <TrayButton $w={16} aria-label="通知">
            <Icon size={14} stroke="#eee"><path d="M8 2C4 2 3.500 4 3.500 7L2 10.500h10L10.500 8M5.500 12c1 1 2 1 3 0M6 5h2.500L6 8h2.500M10 1.500h2.500l-2.500 3h2.500" /></Icon>
          </TrayButton>
        </Tray>
      </Taskbar>
    </Screen>
  );
}
